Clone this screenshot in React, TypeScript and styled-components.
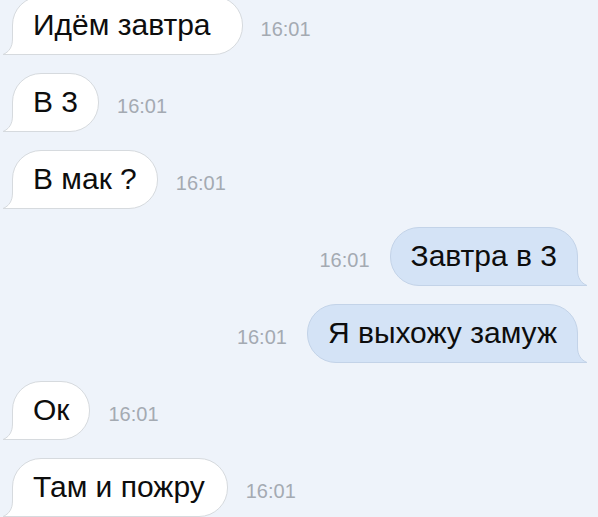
import styled, { createGlobalStyle } from "styled-components";

const GlobalStyle = createGlobalStyle`
  html, body {
    margin: 0;
    padding: 0;
    background: #eef3fa;
  }
  body {
    width: 598px;
    height: 517px;
    overflow: hidden;
    font-family: "Liberation Sans", Arial, sans-serif;
  }
`;

const Feed = styled.div`
  display: flex;
  flex-direction: column;
  gap: 18px;
  margin-top: -4px;
  padding: 0 20px 0 12px;
`;

const Row = styled.div<{ $mine?: boolean }>`
  display: flex;
  align-items: center;
  justify-content: ${(p) => (p.$mine ? "flex-end" : "flex-start")};
  gap: ${(p) => (p.$mine ? "20px" : "18px")};
`;

const Bubble = styled.div<{ $mine?: boolean; $tailPad?: number }>`
  position: relative;
  box-sizing: border-box;
  height: 59px;
  padding: 0 ${(p) => p.$tailPad ?? 20}px 2px 20px;
  display: flex;
  align-items: center;
  font-size: 30px;
  color: #0d0d0d;
  white-space: nowrap;
  background: ${(p) => (p.$mine ? "#d4e3f6" : "#ffffff")};
  border: 1px solid ${(p) => (p.$mine ? "#c3d3e8" : "#d6dade")};
  border-radius: ${(p) => (p.$mine ? "29px 29px 0 29px" : "29px 29px 29px 0")};
`;

const TailSvg = styled.svg<{ $mine?: boolean }>`
  position: absolute;
  bottom: -1px;
  width: 24px;
  height: 24px;
  overflow: visible;
  ${(p) => (p.$mine ? "right: -11px; transform: scaleX(-1);" : "left: -11px;")}
`;

const Time = styled.span`
  font-size: 20px;
  color: #a4aab2;
  margin-top: 7px;
`;

type Props = { text: string; mine?: boolean; tailPad?: number };

const Tail = ({ mine }: { mine?: boolean }) => {
  const fill = mine ? "#d4e3f6" : "#ffffff";
  const stroke = mine ? "#c3d3e8" : "#d6dade";
  return (
    <TailSvg $mine={mine} viewBox="0 0 24 24">
      <path d="M10 6 H24 V24 H10 Z" fill={fill} />
      <path d="M10.5 0 V8 C10.5 16 7 21 1 23.5 H24 V0 Z" fill={fill} />
      <path d="M10.5 0 V8 C10.5 16 7 21 1 23.5 H24" fill="none" stroke={stroke} strokeWidth="1" />
    </TailSvg>
  );
};

const Message = ({ text, mine, tailPad }: Props) => (
  <Row $mine={mine}>
    {mine && <Time>16:01</Time>}
    <Bubble $mine={mine} $tailPad={tailPad}>
      {text}
      <Tail mine={mine} />
    </Bubble>
    {!mine && <Time>16:01</Time>}
  </Row>
);

const messages: Props[] = [
  { text: "Идём завтра", tailPad: 31 },
  { text: "В 3" },
  { text: "В мак ?" },
  { text: "Завтра в 3", mine: true },
  { text: "Я выхожу замуж", mine: true },
  { text: "Ок" },
  { text: "Там и пожру", tailPad: 22 },
];

const App = () => (
  <>
    <GlobalStyle />
    <Feed>
      {messages.map((m, i) => (
        <Message key={i} text={m.text} mine={m.mine} tailPad={m.tailPad} />
      ))}
    </Feed>
  </>
);

export default App;
